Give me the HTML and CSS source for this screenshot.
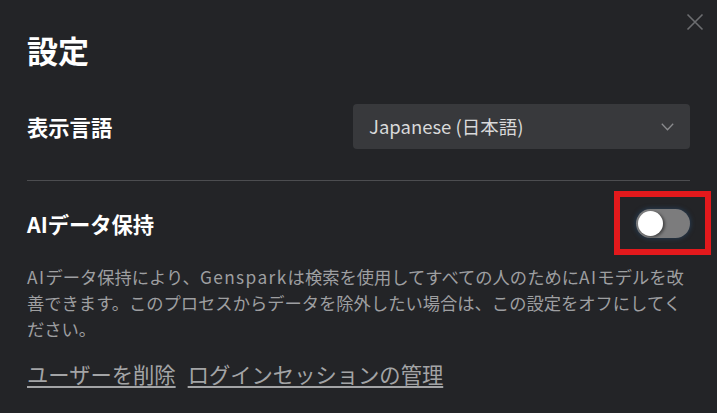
FILE: index.html
```html
<!DOCTYPE html>
<html lang="ja">
<head>
<meta charset="utf-8">
<link rel="stylesheet" href="styles.css">
</head>
<body>
<div class="dialog">
  <button class="close" aria-label="閉じる">
    <svg width="18" height="18" viewBox="0 0 18 18"><path d="M1.5 1.5 L16.5 16.5 M16.5 1.5 L1.5 16.5" stroke="#6c6d70" stroke-width="1.6" fill="none"/></svg>
  </button>
  <h1 class="title">設定</h1>
  <div class="row lang-row">
    <div class="label">表示言語</div>
    <div class="select">
      <span class="select-text">Japanese (日本語)</span>
      <svg class="chev" width="13" height="8" viewBox="0 0 13 8"><path d="M0.8 0.8 L6.5 6.8 L12.2 0.8" stroke="#8a8b8e" stroke-width="1.3" fill="none"/></svg>
    </div>
  </div>
  <div class="divider"></div>
  <div class="row ai-row">
    <div class="label">AIデータ保持</div>
    <div class="toggle-wrap">
      <div class="toggle"><span class="knob"></span></div>
      <div class="highlight"></div>
    </div>
  </div>
  <p class="desc"><span class="latin">AI</span>データ保持により、<span class="latin">Genspark</span>は検索を使用してすべての人のために<span class="latin">AI</span>モデルを改善できます。このプロセスからデータを除外したい場合は、この設定をオフにしてください。</p>
  <div class="links">
    <a class="link" href="#">ユーザーを削除</a>
    <a class="link" href="#">ログインセッションの管理</a>
  </div>
</div>
</body>
</html>
```
FILE: styles.css
```css
html, body {
  margin: 0;
  padding: 0;
  background: #232427;
}
body {
  width: 717px;
  height: 413px;
  overflow: hidden;
  font-family: "Noto Sans CJK JP", "Noto Sans", sans-serif;
}
.dialog {
  position: relative;
  box-sizing: border-box;
  width: 717px;
  height: 413px;
  padding: 34px 27px 0 27px;
  background: #232427;
}
.close {
  position: absolute;
  top: 13px;
  left: 686px;
  width: 18px;
  height: 18px;
  padding: 0;
  border: 0;
  background: transparent;
  display: block;
}
.close svg { display: block; }
.title {
  margin: 0;
  font-size: 31px;
  line-height: 31px;
  font-weight: 700;
  color: #ffffff;
}
.row {
  display: flex;
  align-items: center;
  justify-content: space-between;
}
.label {
  font-size: 21.3px;
  font-weight: 700;
  color: #ffffff;
  line-height: 1.2;
}
.lang-row {
  margin-top: 39px;
  height: 45px;
}
.select {
  box-sizing: border-box;
  width: 337px;
  height: 45px;
  background: #38393c;
  border-radius: 4px;
  display: flex;
  align-items: center;
  justify-content: space-between;
  padding: 0 16px 0 16px;
}
.select-text {
  font-size: 18.5px;
  color: #d9d9da;
  line-height: 1;
}
.chev { display: block; }
.divider {
  margin-top: 31px;
  height: 1px;
  background: #4c4d50;
}
.ai-row {
  margin-top: 28px;
  height: 29px;
}
.toggle-wrap {
  position: relative;
  width: 54px;
  height: 29px;
}
.toggle {
  width: 54px;
  height: 29px;
  border-radius: 15px;
  background: #7c7c7d;
  box-shadow: 0 0 4px 1px rgba(40, 75, 110, 0.55);
  position: relative;
}
.knob {
  position: absolute;
  left: 2px;
  top: 2px;
  width: 25px;
  height: 25px;
  border-radius: 50%;
  background: #ffffff;
  box-shadow: 2px 1px 3px rgba(0, 0, 0, 0.45);
}
.highlight {
  position: absolute;
  left: -22px;
  top: -18px;
  width: 97px;
  height: 64px;
  box-sizing: border-box;
  border: 6px solid #e3191c;
  pointer-events: none;
}
.desc {
  margin: 26px 0 0 0;
  font-size: 17.3px;
  line-height: 26px;
  color: #9e9fa1;
}
.latin {
  letter-spacing: 1.4px;
}
.links {
  margin-top: 18px;
  display: flex;
  gap: 12px;
  line-height: 1.3;
}
.link {
  font-size: 21.3px;
  color: #a3a4a6;
  text-decoration: underline;
  text-underline-offset: 3px;
}
```
